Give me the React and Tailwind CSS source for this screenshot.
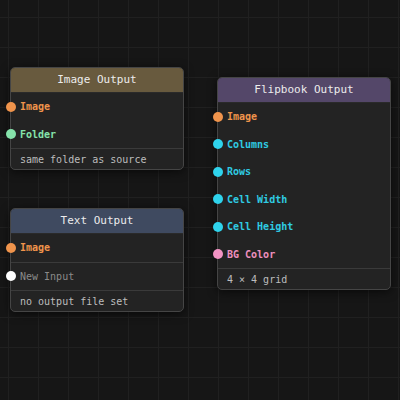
import React from "react";

const mono = { fontFamily: '"DejaVu Sans Mono", "Liberation Mono", monospace' };

function Row({ color, dot, label, divider }) {
  return (
    <div className={`relative flex items-center pl-[9px] ${divider ? "h-[28.5px] border-b border-[#3a3a3a]" : "h-[27.5px]"}`}>
      <span className={`absolute left-[-5.5px] top-1/2 h-[10px] w-[10px] -translate-y-1/2 rounded-full ${dot}`} />
      <span className={`text-[10px] font-semibold ${color}`}>{label}</span>
    </div>
  );
}

function Node({ pos, title, header, rows, footer, dividers }) {
  return (
    <div className={`absolute ${pos} w-[174px] rounded-[5px] border border-[#454545] bg-[#232323] shadow-[0_2px_10px_rgba(0,0,0,0.6)]`}>
      <div className={`flex h-[25px] items-center justify-center rounded-t-[4px] border-b border-[#2a2a2a] ${header}`}>
        <span className="text-[11px] text-[#ececec]">{title}</span>
      </div>
      {rows.map((r, i) => (
        <Row key={i} {...r} divider={dividers} />
      ))}
      <div className={`flex items-center px-[9px] ${dividers ? "h-[20px]" : "h-[21px] border-t border-[#3a3a3a]"}`}>
        <span className="text-[10px] text-[#bdbdbd]">{footer}</span>
      </div>
    </div>
  );
}

const orange = { color: "text-[#f0944c]", dot: "bg-[#f0944c]" };
const cyan = { color: "text-[#2fcbe2]", dot: "bg-[#2fd3ec]" };

export default function App() {
  return (
    <div
      style={mono}
      className="relative h-[400px] w-[400px] overflow-hidden bg-[#161616] bg-[linear-gradient(to_right,#202020_1px,transparent_1px),linear-gradient(to_bottom,#202020_1px,transparent_1px)] bg-[size:30px_30px] bg-[position:8px_17px]"
    >
      <Node
        pos="left-[10px] top-[67px]"
        title="Image Output"
        header="bg-[#685a3e]"
        rows={[
          { ...orange, label: "Image" },
          { color: "text-[#86e3ab]", dot: "bg-[#86e3ab]", label: "Folder" },
        ]}
        footer="same folder as source"
      />
      <Node
        pos="left-[10px] top-[208px]"
        title="Text Output"
        header="bg-[#3f4a60]"
        dividers
        rows={[
          { ...orange, label: "Image" },
          { color: "text-[#8a8a8a] !font-normal", dot: "bg-white", label: "New Input" },
        ]}
        footer="no output file set"
      />
      <Node
        pos="left-[217px] top-[77px]"
        title="Flipbook Output"
        header="bg-[#544769]"
        rows={[
          { ...orange, label: "Image" },
          { ...cyan, label: "Columns" },
          { ...cyan, label: "Rows" },
          { ...cyan, label: "Cell Width" },
          { ...cyan, label: "Cell Height" },
          { color: "text-[#ee8fbf]", dot: "bg-[#f293c4]", label: "BG Color" },
        ]}
        footer="4 × 4 grid"
      />
    </div>
  );
}
